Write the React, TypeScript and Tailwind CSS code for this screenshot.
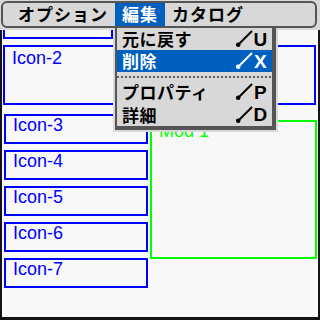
import React from "react";

const menus = [
  { label: "オプション" },
  { label: "編集", active: true },
  { label: "カタログ" },
];

const editItems = [
  { label: "元に戻す", key: "U" },
  { label: "削除", key: "X", active: true },
  { label: "-" },
  { label: "プロパティ", key: "P" },
  { label: "詳細", key: "D" },
];

const icons = ["Icon-3", "Icon-4", "Icon-5", "Icon-6", "Icon-7"];

function StrokeKey({ letter, active }: { letter: string; active?: boolean }) {
  const c = active ? "#ffffff" : "#000000";
  return (
    <div className="flex items-center">
      <svg width="18" height="18" viewBox="0 0 18 18">
        <line x1="3" y1="15" x2="17" y2="1" stroke={c} strokeWidth="2" />
        <circle cx="3.2" cy="14.8" r="2.3" fill={c} />
      </svg>
      <span
        className={`w-[15px] text-center font-['Liberation_Sans',sans-serif] text-[19px] font-bold leading-none ${
          active ? "text-white" : "text-black"
        }`}
      >
        {letter}
      </span>
    </div>
  );
}

export default function App() {
  return (
    <div className="relative flex h-[320px] w-[320px] flex-col overflow-hidden bg-[#d8d8d8]">
      {/* menu bar */}
      <div className="h-[30px] pl-[1px] pt-[1px]">
        <div className="flex h-[27px] w-[316px] items-stretch rounded-[6px] border-2 border-[#555555] bg-[#d8d8d8] pl-[8px] font-['Noto_Sans_CJK_JP',sans-serif] text-[17px] font-bold leading-none tracking-[1px]">
          {menus.map((m) => (
            <div
              key={m.label}
              className={`flex items-center px-[7px] pb-[2px] ${
                m.active ? "bg-[#0060c0] text-white" : "text-black"
              }`}
            >
              {m.label}
            </div>
          ))}
        </div>
      </div>

      {/* screen */}
      <div className="flex-1 overflow-hidden border-x-2 border-b-[3px] border-[#141414] bg-[#f8f8f8] font-['Liberation_Sans',sans-serif] text-[18px] leading-[16px]">
        <div className="ml-[1px] h-[9px] w-[110px] border-2 border-t-0 border-[#0000ff]" />
        <div className="ml-[1px] mt-[6px] h-[60px] w-[313px] border-2 border-[#0000ff] pl-[7px] pt-[3px] text-[#0000ff]">
          Icon-2
        </div>
        <div className="mt-[9px] flex">
          <div className="ml-[2px] flex w-[144px] flex-col gap-[6px]">
            {icons.map((name) => (
              <div
                key={name}
                className="h-[30px] border-2 border-[#0000ff] pl-[7px] pt-[1px] text-[#0000ff]"
              >
                {name}
              </div>
            ))}
          </div>
          <div className="ml-[2px] mt-[6px] h-[139px] w-[167px] border-2 border-[#00ff00] pl-[7px] pt-[1px] text-[#00ff00]">
            Mod 1
          </div>
        </div>
      </div>

      {/* edit menu dropdown */}
      <div className="absolute left-[113px] top-[28px] bg-[#d8d8d8] px-[2px] pb-[2px]">
        <div className="w-[161px] border-b-4 border-l-2 border-r-4 border-[#555555] bg-[#d8d8d8] font-['Noto_Sans_CJK_JP',sans-serif] text-[17px] font-bold leading-none tracking-[0.5px]">
          {editItems.map((it, i) =>
            it.label === "-" ? (
              <div key={i} className="flex h-[9px] items-center">
                <div className="h-[2px] w-full bg-[repeating-linear-gradient(90deg,#606060_0_2px,transparent_2px_4px)]" />
              </div>
            ) : (
              <div
                key={i}
                className={`flex items-center justify-between pl-[5px] pr-[4px] ${
                  i === editItems.length - 1 ? "h-[23px]" : "h-[22px]"
                } ${it.active ? "bg-[#0060c0] text-white" : "text-black"}`}
              >
                <span className="pb-[1px]">{it.label}</span>
                <StrokeKey letter={it.key!} active={it.active} />
              </div>
            )
          )}
        </div>
      </div>
    </div>
  );
}
